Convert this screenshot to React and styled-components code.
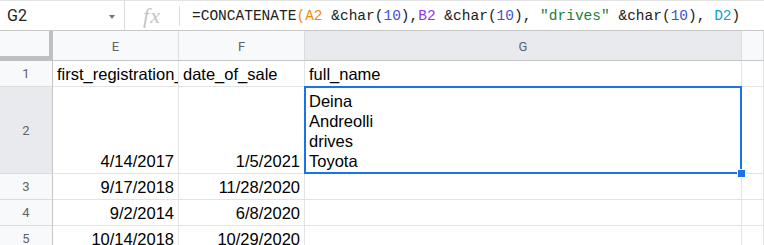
import React from 'react'
import styled, { createGlobalStyle } from 'styled-components'

const GlobalStyle = createGlobalStyle`
  html, body {
    margin: 0;
    padding: 0;
    background: #fff;
  }
  body {
    font-family: "Liberation Sans", Arial, sans-serif;
  }
`;

const Page = styled.div`
  width: 764px;
  height: 245px;
  overflow: hidden;
  background: #fff;
`;

const FormulaBar = styled.div`
  display: flex;
  align-items: center;
  height: 30px;
  border-top: 1px solid #e3e3e3;
  border-bottom: 1px solid #c7c7c7;
  box-sizing: border-box;
  height: 31px;
`;

const NameBox = styled.div`
  width: 125px;
  height: 100%;
  display: flex;
  align-items: center;
  justify-content: space-between;
  padding: 0 9px 0 7px;
  box-sizing: border-box;
  border-right: 1px solid #dadce0;
  font-family: Roboto, "Liberation Sans", sans-serif;
  font-size: 16px;
  color: #202124;
`;

const Caret = styled.span`
  width: 0;
  height: 0;
  border-left: 3.5px solid transparent;
  border-right: 3.5px solid transparent;
  border-top: 4px solid #70757a;
  margin-top: 2px;
`;

const FxBox = styled.div`
  width: 54px;
  height: 20px;
  display: flex;
  align-items: center;
  justify-content: center;
  border-right: 1px solid #dadce0;
  font-family: "Liberation Serif", serif;
  font-style: italic;
  font-size: 22px;
  color: #c4c4c4;
  letter-spacing: 1px;
`;

const Formula = styled.div`
  padding-left: 12px;
  font-family: "Liberation Mono", monospace;
  font-size: 14.5px;
  color: #202124;
  white-space: pre;
`;

const Tok = styled.span`
  color: ${p => p.c || 'inherit'};
`;

const Grid = styled.div`
  display: grid;
  grid-template-columns: 53px 126px 126px 437px 1fr;
  grid-template-rows: 30px 26px 87px 26px 26px 26px;
`;

const Corner = styled.div`
  background: #f8f9fa;
  border-right: 4px solid #c0c0c0;
  border-bottom: 5px solid #c0c0c0;
  box-sizing: border-box;
`;

const ColHead = styled.div`
  display: flex;
  align-items: center;
  justify-content: center;
  background: ${p => (p.active ? '#e8eaed' : '#f8f9fa')};
  border-right: 1px solid #dadce0;
  border-bottom: 1px solid #c4c7c5;
  box-sizing: border-box;
  font-family: Roboto, "Liberation Sans", sans-serif;
  font-size: 13px;
  color: #5f6368;
  padding-top: 1px;
`;

const RowHead = styled.div`
  display: flex;
  align-items: center;
  justify-content: center;
  background: ${p => (p.active ? '#e8eaed' : '#f8f9fa')};
  border-right: 1px solid #c4c7c5;
  border-bottom: 1px solid #dadce0;
  box-sizing: border-box;
  font-family: Roboto, "Liberation Sans", sans-serif;
  font-size: 13px;
  color: #5f6368;
`;

const Cell = styled.div`
  position: relative;
  display: flex;
  flex-direction: column;
  justify-content: ${p => (p.top ? 'flex-start' : 'flex-end')};
  align-items: ${p => (p.num ? 'flex-end' : 'flex-start')};
  padding: ${p => (p.top ? '4px 4px 0' : '0 4px 2px')};
  border-right: 1px solid #e2e3e3;
  border-bottom: 1px solid #e2e3e3;
  box-sizing: border-box;
  overflow: hidden;
  white-space: nowrap;
  font-size: 16.5px;
  line-height: 20px;
  color: #000;
`;

const Selection = styled.div`
  position: absolute;
  top: -1px;
  left: -1px;
  right: -1px;
  bottom: -1px;
  border: 2px solid #1a73e8;
  pointer-events: none;
`;

const Handle = styled.div`
  position: absolute;
  right: -5px;
  bottom: -5px;
  width: 7px;
  height: 7px;
  background: #1a73e8;
  border: 1px solid #fff;
`;

const SelectedCell = styled(Cell)`
  overflow: visible;
  z-index: 1;
`;

const rows = [
  { n: 1, e: 'first_registration_', f: 'date_of_sale', g: 'full_name', text: true },
  { n: 3, e: '9/17/2018', f: '11/28/2020' },
  { n: 4, e: '9/2/2014', f: '6/8/2020' },
  { n: 5, e: '10/14/2018', f: '10/29/2020' },
];

const Row = ({ r }) => (
  <>
    <RowHead>{r.n}</RowHead>
    <Cell num={!r.text}>{r.e}</Cell>
    <Cell num={!r.text}>{r.f}</Cell>
    <Cell>{r.g}</Cell>
    <Cell />
  </>
);

const App = () => {
  const orange = '#f28b00';
  const num = '#3f51d6';
  return (
    <Page>
      <GlobalStyle />
      <FormulaBar>
        <NameBox>
          <span>G2</span>
          <Caret />
        </NameBox>
        <FxBox>fx</FxBox>
        <Formula>
          =CONCATENATE<Tok c={orange}>(</Tok><Tok c={orange}>A2</Tok> &amp;char(<Tok c={num}>10</Tok>),
          <Tok c="#9334e6">B2</Tok> &amp;char(<Tok c={num}>10</Tok>), <Tok c="#188038">"drives"</Tok> &amp;char(
          <Tok c={num}>10</Tok>), <Tok c="#12a4d0">D2</Tok>)
        </Formula>
      </FormulaBar>
      <Grid>
        <Corner />
        <ColHead>E</ColHead>
        <ColHead>F</ColHead>
        <ColHead active>G</ColHead>
        <ColHead />

        <Row r={rows[0]} />

        <RowHead active>2</RowHead>
        <Cell num>4/14/2017</Cell>
        <Cell num>1/5/2021</Cell>
        <SelectedCell top>
          <span>Deina</span>
          <span>Andreolli</span>
          <span>drives</span>
          <span>Toyota</span>
          <Selection />
          <Handle />
        </SelectedCell>
        <Cell />

        {rows.slice(1).map(r => (
          <Row key={r.n} r={r} />
        ))}
      </Grid>
    </Page>
  );
};

export default App
